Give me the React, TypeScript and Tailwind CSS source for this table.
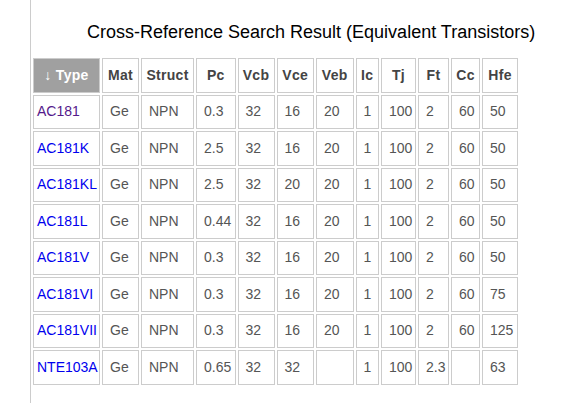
import type { ReactNode } from 'react';

interface Transistor {
  type: string;
  visited?: boolean;
  mat: string;
  struct: string;
  pc: string;
  vcb: string;
  vce: string;
  veb: string;
  ic: string;
  tj: string;
  ft: string;
  cc: string;
  hfe: string;
}

const ROWS: Transistor[] = [
  { type: 'AC181', visited: true, mat: 'Ge', struct: 'NPN', pc: '0.3', vcb: '32', vce: '16', veb: '20', ic: '1', tj: '100', ft: '2', cc: '60', hfe: '50' },
  { type: 'AC181K', mat: 'Ge', struct: 'NPN', pc: '2.5', vcb: '32', vce: '16', veb: '20', ic: '1', tj: '100', ft: '2', cc: '60', hfe: '50' },
  { type: 'AC181KL', mat: 'Ge', struct: 'NPN', pc: '2.5', vcb: '32', vce: '20', veb: '20', ic: '1', tj: '100', ft: '2', cc: '60', hfe: '50' },
  { type: 'AC181L', mat: 'Ge', struct: 'NPN', pc: '0.44', vcb: '32', vce: '16', veb: '20', ic: '1', tj: '100', ft: '2', cc: '60', hfe: '50' },
  { type: 'AC181V', mat: 'Ge', struct: 'NPN', pc: '0.3', vcb: '32', vce: '16', veb: '20', ic: '1', tj: '100', ft: '2', cc: '60', hfe: '50' },
  { type: 'AC181VI', mat: 'Ge', struct: 'NPN', pc: '0.3', vcb: '32', vce: '16', veb: '20', ic: '1', tj: '100', ft: '2', cc: '60', hfe: '75' },
  { type: 'AC181VII', mat: 'Ge', struct: 'NPN', pc: '0.3', vcb: '32', vce: '16', veb: '20', ic: '1', tj: '100', ft: '2', cc: '60', hfe: '125' },
  { type: 'NTE103A', mat: 'Ge', struct: 'NPN', pc: '0.65', vcb: '32', vce: '32', veb: '', ic: '1', tj: '100', ft: '2.3', cc: '', hfe: '63' },
];

const COLUMNS: { key: keyof Transistor; label: string }[] = [
  { key: 'mat', label: 'Mat' },
  { key: 'struct', label: 'Struct' },
  { key: 'pc', label: 'Pc' },
  { key: 'vcb', label: 'Vcb' },
  { key: 'vce', label: 'Vce' },
  { key: 'veb', label: 'Veb' },
  { key: 'ic', label: 'Ic' },
  { key: 'tj', label: 'Tj' },
  { key: 'ft', label: 'Ft' },
  { key: 'cc', label: 'Cc' },
  { key: 'hfe', label: 'Hfe' },
];

function Th({ children }: { children: ReactNode }) {
  return (
    <th className="h-[34.5px] border border-[#cccccc] bg-white px-[2px] text-center text-[14px] font-bold tracking-[0.3px] text-[#444444]">
      {children}
    </th>
  );
}

function Td({ children }: { children: ReactNode }) {
  return (
    <td className="h-[34.5px] border border-[#cccccc] bg-white pl-[7px] pr-[2px] text-left text-[14px] text-[#555555]">
      {children}
    </td>
  );
}

// Résultat de recherche d'équivalences : titre puis tableau à bordures séparées.
export default function App() {
  return (
    <div className="min-h-[403px] w-[569px] bg-white font-['Liberation_Sans',Arial,sans-serif]">
      <div className="ml-[30px] min-h-[403px] border-l border-[#cccccc]">
        <h1 className="pl-[56px] pt-[22px] text-[18px] leading-[21px] font-normal text-black">
          Cross-Reference Search Result (Equivalent Transistors)
        </h1>
        <table className="mt-[13px] w-[489px] table-fixed border-separate border-spacing-[2px]">
          <colgroup>
            <col className="w-[67px]" />
            <col className="w-[37px]" />
            <col className="w-[53px]" />
            <col className="w-[39.5px]" />
            <col className="w-[37px]" />
            <col className="w-[37.5px]" />
            <col className="w-[37.5px]" />
            <col className="w-[23.5px]" />
            <col className="w-[35px]" />
            <col className="w-[31px]" />
            <col className="w-[29px]" />
            <col className="w-[36px]" />
          </colgroup>
          <thead>
            <tr>
              <th className="h-[34.5px] border border-[#cccccc] bg-[#a0a0a0] text-center text-[14px] font-bold tracking-[0.3px] text-white">
                ↓ Type
              </th>
              {COLUMNS.map((c) => (
                <Th key={c.key}>{c.label}</Th>
              ))}
            </tr>
          </thead>
          <tbody>
            {ROWS.map((r) => (
              <tr key={r.type}>
                <td className="h-[34.5px] border border-[#cccccc] bg-white pl-[3px] pr-[1px] text-left text-[14px]">
                  <a href="#" className={r.visited ? 'text-[#551a8b]' : 'text-[#0000ee]'}>
                    {r.type}
                  </a>
                </td>
                {COLUMNS.map((c) => (
                  <Td key={c.key}>{r[c.key]}</Td>
                ))}
              </tr>
            ))}
          </tbody>
        </table>
      </div>
    </div>
  );
}
